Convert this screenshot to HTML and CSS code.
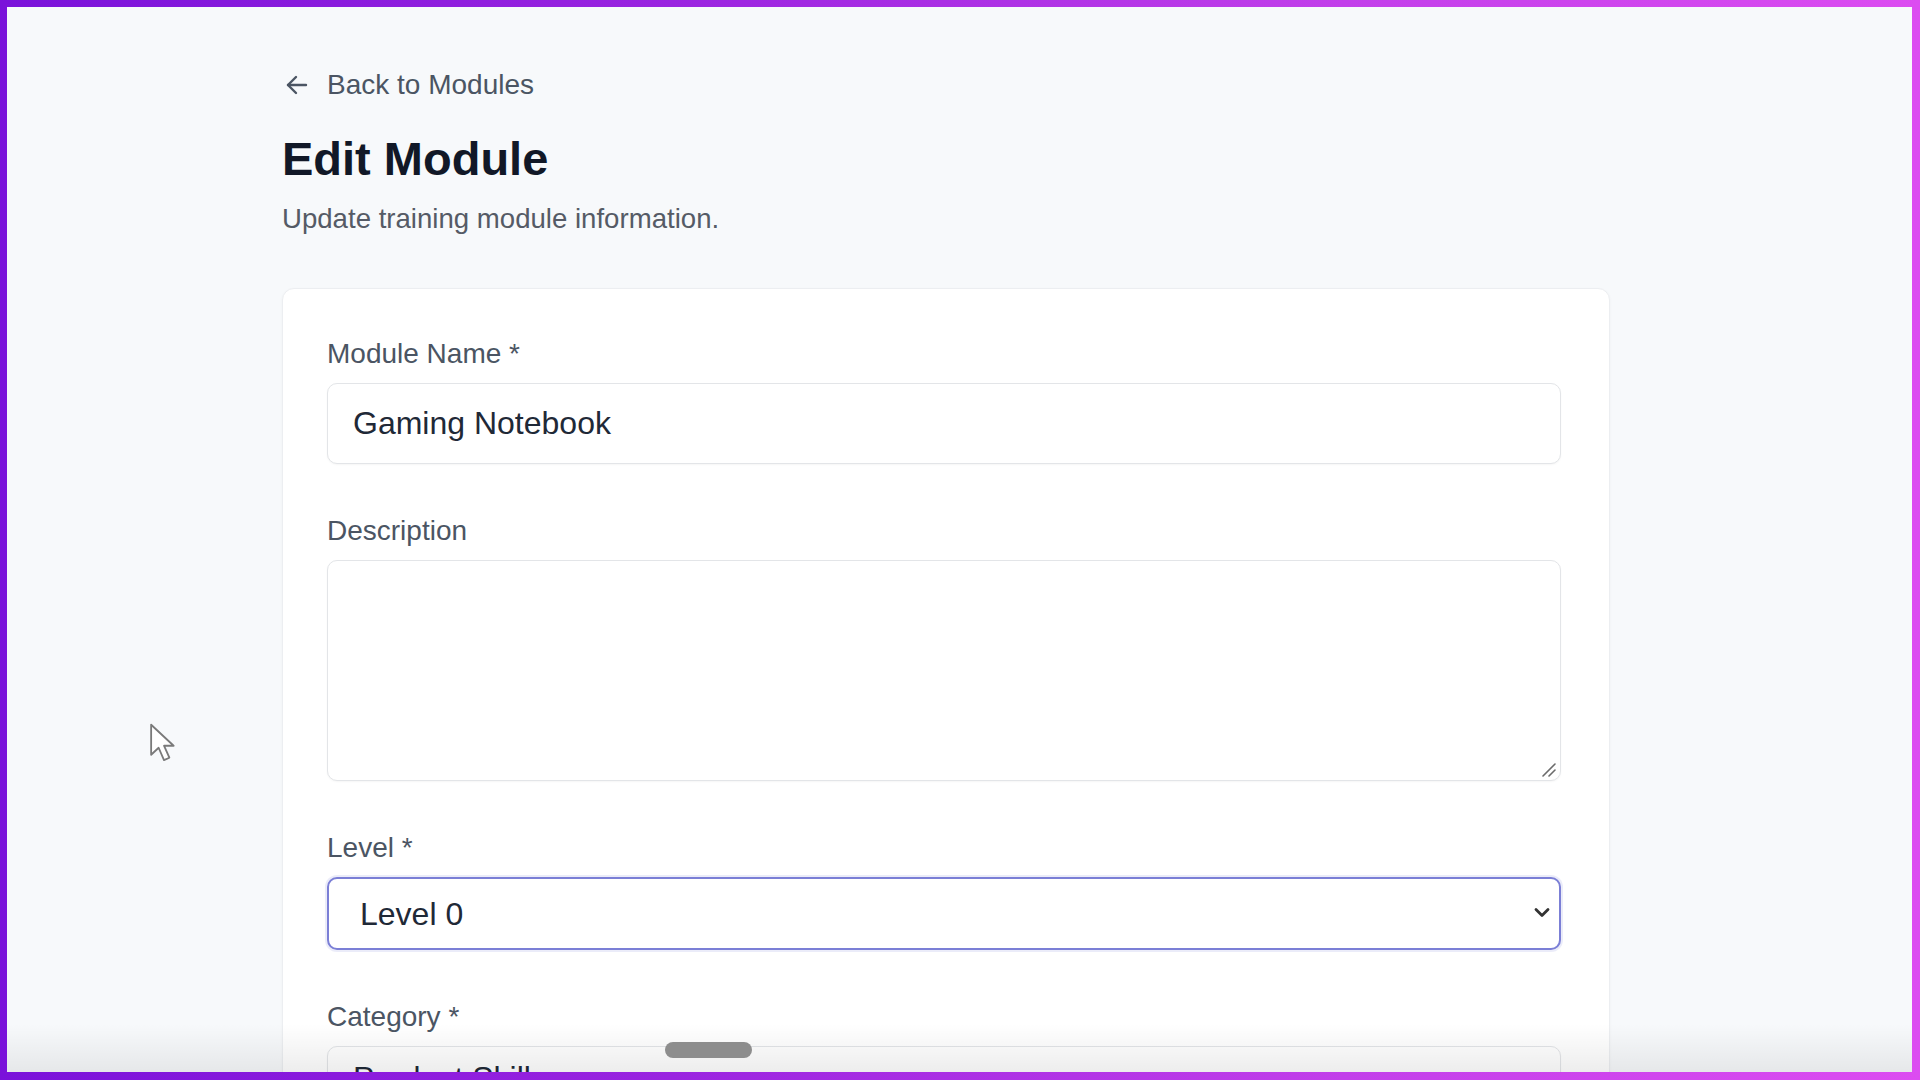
FILE: index.html
```html
<!DOCTYPE html>
<html lang="en">
<head>
  <meta charset="UTF-8">
  <title>Edit Module</title>
  <link rel="stylesheet" href="styles.css">
</head>
<body>
  <div class="screen">
    <div class="page">
      <a class="back-link" href="#">
        <svg class="back-icon" width="22" height="20" viewBox="0 0 22 20" fill="none" stroke="currentColor" stroke-width="2.4" stroke-linecap="round" stroke-linejoin="round">
          <path d="M20 10H2"/>
          <path d="M10 2L2 10l8 8"/>
        </svg>
        <span>Back to Modules</span>
      </a>

      <h1 class="title">Edit Module</h1>
      <p class="subtitle">Update training module information.</p>

      <div class="card">
        <div class="field">
          <label for="moduleName">Module Name *</label>
          <input type="text" id="moduleName" class="text-input" value="Gaming Notebook">
        </div>

        <div class="field">
          <label for="description">Description</label>
          <div class="textarea-wrap">
            <textarea id="description" class="text-area"></textarea>
            <svg class="resize-grip" width="16" height="14" viewBox="0 0 16 14" fill="none" stroke="#6b6b6b" stroke-width="1.6" stroke-linecap="round">
              <path d="M2 13L14 1"/>
              <path d="M8 13L14 7"/>
            </svg>
          </div>
        </div>

        <div class="field">
          <label for="level">Level *</label>
          <div class="select-wrap">
            <select id="level" class="select-input">
              <option>Level 0</option>
              <option>Level 1</option>
              <option>Level 2</option>
            </select>
            <svg class="chevron" width="18" height="12" viewBox="0 0 18 12" fill="none" stroke="#333" stroke-width="2.8" stroke-linecap="round" stroke-linejoin="round">
              <path d="M3 2.5l6 6 6-6"/>
            </svg>
          </div>
        </div>

        <div class="field">
          <label for="category">Category *</label>
          <input type="text" id="category" class="text-input category-input" value="Product Skills">
        </div>
      </div>
    </div>

    <!-- video player overlays -->
    <div class="bottom-fade"></div>
    <div class="scrub-pill"></div>
    <svg class="pointer" width="30" height="44" viewBox="0 0 28 40" fill="#fff" stroke="#7a7a7a" stroke-width="1.7" stroke-linejoin="round">
      <path d="M2 2V30L9 23.5L14 35L19 32.8L14 21.6H23Z"/>
    </svg>
  </div>
</body>
</html>
```

FILE: styles.css
```css
body {
  margin: 0;
  padding: 0;
  height: 1080px;
  overflow: hidden;
  background: linear-gradient(90deg, #7a12da 0%, #9a24e0 35%, #c23fea 70%, #dc4cf1 100%);
  font-family: "Liberation Sans", Arial, sans-serif;
}

.screen {
  position: relative;
  margin: 7px 8px 0 7px;
  height: 1065px;
  overflow: hidden;
  background-color: #f7f9fb;
}

.page {
  padding: 62px 0 0 275px;
  width: 1328px;
}

/* Header */
.back-link {
  display: flex;
  align-items: center;
  gap: 19px;
  height: 32px;
  padding-left: 4px;
  color: #4b5563;
  font-size: 28px;
  line-height: 32px;
  text-decoration: none;
}

.back-icon {
  color: #4b5563;
}

.title {
  margin: 30px 0 0 0;
  font-size: 47px;
  line-height: 56px;
  font-weight: bold;
  color: #111827;
}

.subtitle {
  margin: 15px 0 0 0;
  font-size: 27.6px;
  line-height: 34px;
  color: #555b66;
}

/* Card */
.card {
  margin-top: 52px;
  padding: 49px 48px 40px 44px;
  background-color: #fff;
  border: 1px solid #eceef1;
  border-radius: 12px;
  box-shadow: 0 1px 3px rgba(0, 0, 0, 0.04);
}

.field {
  margin-bottom: 51px;
}

.field label {
  display: block;
  margin-bottom: 13px;
  font-size: 28px;
  line-height: 32px;
  color: #4b5563;
}

.text-input,
.text-area,
.select-input {
  display: block;
  box-sizing: border-box;
  width: 100%;
  margin: 0;
  font-family: "Liberation Sans", Arial, sans-serif;
  font-size: 32px;
  color: #1f2937;
  background-color: #fff;
  border: 1px solid #e3e5e8;
  border-radius: 10px;
  box-shadow: 0 1px 2px rgba(0, 0, 0, 0.04);
  outline: none;
}

.text-input {
  height: 81px;
  padding: 0 25px;
}

/* the value sits a little higher in the recording, where the frame cuts it */
.category-input {
  padding-bottom: 16px;
}

.textarea-wrap,
.select-wrap {
  position: relative;
}

.text-area {
  height: 221px;
  padding: 20px 25px;
  resize: none;
}

.resize-grip {
  position: absolute;
  right: 4px;
  bottom: 4px;
}

.select-input {
  height: 73px;
  padding: 0 60px 0 31px;
  border: 2px solid #7b7fd6;
  box-shadow: 0 0 0 2px rgba(123, 127, 214, 0.15);
  appearance: none;
  -webkit-appearance: none;
}

.chevron {
  position: absolute;
  right: 10px;
  top: 30px;
  pointer-events: none;
}

/* Overlays from the recording */
.bottom-fade {
  position: absolute;
  left: 0;
  right: 0;
  bottom: 0;
  height: 48px;
  background: linear-gradient(to bottom, rgba(0, 0, 0, 0), rgba(0, 0, 0, 0.07));
  pointer-events: none;
}

.scrub-pill {
  position: absolute;
  left: 658px;
  top: 1035px;
  width: 87px;
  height: 16px;
  border-radius: 8px;
  background-color: #8d8d8d;
}

.pointer {
  position: absolute;
  left: 142px;
  top: 715px;
}
```
